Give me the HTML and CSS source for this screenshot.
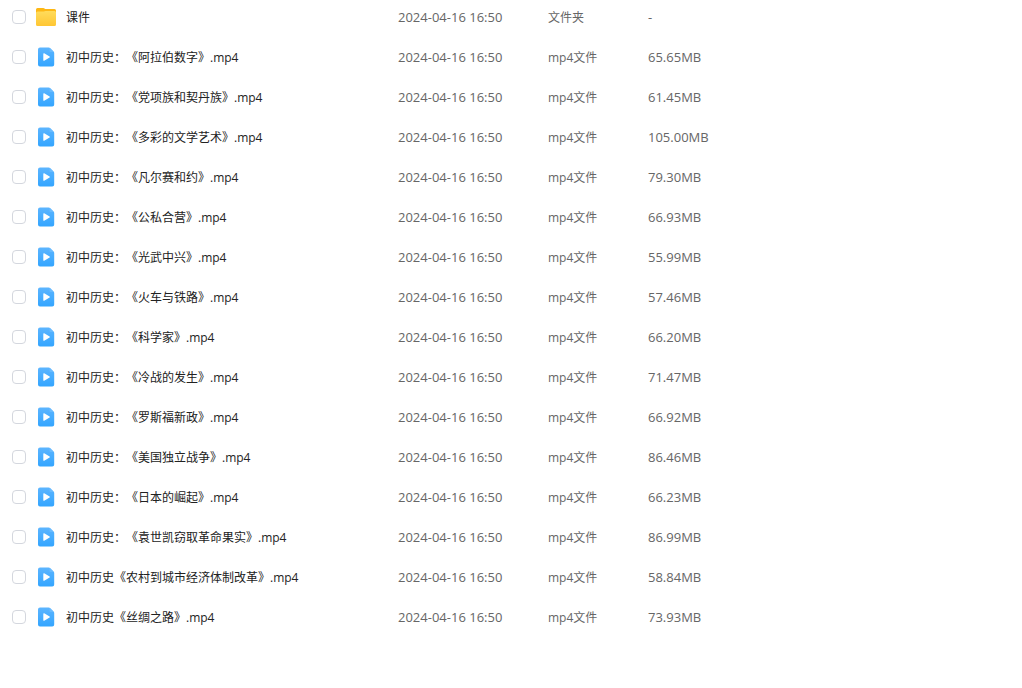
FILE: index.html
```html
<!DOCTYPE html>
<html lang="zh-CN">
<head>
<meta charset="utf-8">
<title>文件列表</title>
<link rel="stylesheet" href="styles.css">
</head>
<body>
<svg class="defs" aria-hidden="true">
  <defs>
    <linearGradient id="blue" x1="0" y1="0" x2="0" y2="1"><stop offset="0" stop-color="#5cb5ff"/><stop offset="1" stop-color="#33a5ff"/></linearGradient>
    <linearGradient id="gold" x1="0" y1="0" x2="0" y2="1"><stop offset="0" stop-color="#ffdc5c"/><stop offset="1" stop-color="#ffc633"/></linearGradient>
    <symbol id="video" viewBox="0 0 20 20">
      <path fill="url(#blue)" d="M4 .5h8.700a2 2 0 0 1 1.400.6l3.500 3.500a2 2 0 0 1 .6 1.400v11.500a2 2 0 0 1-2 2H4a2 2 0 0 1-2-2v-15a2 2 0 0 1 2-2z"/>
      <path fill="#7dc6ff" d="M13.500.7l4.400 4.400h-3.400a1 1 0 0 1-1-1z" opacity=".5"/>
      <path fill="#fff" d="M7.300 6.800v6.400c0 .5.500.8.900.5l5.400-3.200c.4-.2.400-.8 0-1L8.200 6.300c-.4-.3-.9 0-.9.500z"/>
    </symbol>
    <symbol id="folder" viewBox="0 0 20 20">
      <path fill="#fdb714" d="M1.500 1h5.800a2 2 0 0 1 1.200.4l.8.600h9.200A1.500 1.500 0 0 1 20 3.500V12H0V2.500A1.500 1.500 0 0 1 1.500 1z"/>
      <path fill="url(#gold)" d="M0 6a1.500 1.500 0 0 1 1.500-1.500h6.300L9.500 4h9A1.500 1.500 0 0 1 20 5.500v12a1.500 1.500 0 0 1-1.500 1.500h-17A1.500 1.500 0 0 1 0 17.500z"/>
    </symbol>
  </defs>
</svg>
<table class="files">
  <colgroup><col class="col-name"><col class="col-time"><col class="col-type"><col></colgroup>
  <tbody id="rows"></tbody>
</table>
<script src="files.js"></script>
</body>
</html>
```
FILE: styles.css
```css
body {
  margin: 0;
  background: #fff;
  color: #666;
  font: 13px/20px "Open Sans", "Noto Sans CJK SC", sans-serif;
  text-spacing-trim: space-all;
}
.defs { position: absolute; width: 0; height: 0; }
.files { width: 100%; table-layout: fixed; border-collapse: collapse; }
.col-name { width: 398px; }
.col-time { width: 150px; }
.col-type { width: 100px; }
.files td { box-sizing: border-box; height: 40px; padding: 0; white-space: nowrap; }
.files tr:first-child td { height: 37px; padding-bottom: 3px; }
.file { display: flex; align-items: center; padding-left: 12px; color: #222; font-size: 12px; }
.file label { padding-top: 2px; }
.check {
  appearance: none;
  box-sizing: border-box;
  width: 14px;
  height: 14px;
  margin: 0 10px 0 0;
  border: 1px solid #d4d7de;
  border-radius: 4px;
  background: #fff;
}
.check:checked { background: #34a4fd; }
.icon { width: 20px; height: 20px; margin-right: 10px; }
.type { font-size: 12px; }
.type span { display: block; padding-top: 2px; }
```
FILE: files.js
```js
const files = [
  ["课件", "文件夹", "-"],
  ["初中历史：《阿拉伯数字》.mp4", "mp4文件", "65.65MB"],
  ["初中历史：《党项族和契丹族》.mp4", "mp4文件", "61.45MB"],
  ["初中历史：《多彩的文学艺术》.mp4", "mp4文件", "105.00MB"],
  ["初中历史：《凡尔赛和约》.mp4", "mp4文件", "79.30MB"],
  ["初中历史：《公私合营》.mp4", "mp4文件", "66.93MB"],
  ["初中历史：《光武中兴》.mp4", "mp4文件", "55.99MB"],
  ["初中历史：《火车与铁路》.mp4", "mp4文件", "57.46MB"],
  ["初中历史：《科学家》.mp4", "mp4文件", "66.20MB"],
  ["初中历史：《冷战的发生》.mp4", "mp4文件", "71.47MB"],
  ["初中历史：《罗斯福新政》.mp4", "mp4文件", "66.92MB"],
  ["初中历史：《美国独立战争》.mp4", "mp4文件", "86.46MB"],
  ["初中历史：《日本的崛起》.mp4", "mp4文件", "66.23MB"],
  ["初中历史：《袁世凯窃取革命果实》.mp4", "mp4文件", "86.99MB"],
  ["初中历史《农村到城市经济体制改革》.mp4", "mp4文件", "58.84MB"],
  ["初中历史《丝绸之路》.mp4", "mp4文件", "73.93MB"]
];
document.getElementById("rows").innerHTML = files.map(([name, type, size], i) => `
  <tr>
    <td><div class="file">
      <input class="check" type="checkbox" id="file-${i}">
      <svg class="icon" aria-hidden="true"><use href="#${type === "文件夹" ? "folder" : "video"}"/></svg>
      <label for="file-${i}">${name}</label>
    </div></td>
    <td>2024-04-16 16:50</td>
    <td class="type"><span>${type}</span></td>
    <td>${size}</td>
  </tr>`).join("");
```
